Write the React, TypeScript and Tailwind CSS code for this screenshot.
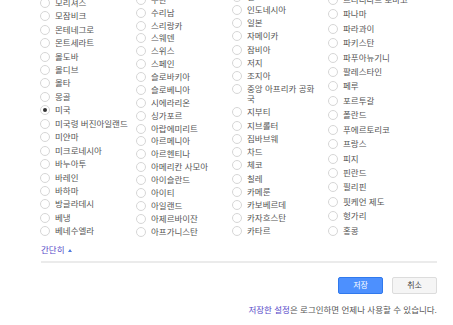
const COLUMNS: { items: string[]; row: string; label: string }[] = [
  {
    row: 'py-[1.72px]',
    label: 'pr-0',
    items: [
      '모리셔스', '모잠비크', '몬테네그로', '몬트세라트', '몰도바', '몰디브', '몰타', '몽골', '미국',
      '미국령 버진아일랜드', '미얀마', '미크로네시아', '바누아투', '바레인', '바하마', '방글라데시', '베냉', '베네수엘라',
    ],
  },
  {
    row: 'py-[1.45px]',
    label: 'pr-0',
    items: [
      '수단', '수리남', '스리랑카', '스웨덴', '스위스', '스페인', '슬로바키아', '슬로베니아', '시에라리온', '싱가포르',
      '아랍에미리트', '아르메니아', '아르헨티나', '아메리칸 사모아', '아이슬란드', '아이티', '아일랜드', '아제르바이잔', '아프가니스탄',
    ],
  },
  {
    row: 'py-[1.62px]',
    label: 'pr-[8px]',
    items: [
      '인도', '인도네시아', '일본', '자메이카', '잠비아', '저지', '조지아', '중앙 아프리카 공화국', '지부티', '지브롤터',
      '짐바브웨', '차드', '체코', '칠레', '카메룬', '카보베르데', '카자흐스탄', '카타르',
    ],
  },
  {
    row: 'py-[2.23px]',
    label: 'pr-0',
    items: [
      '트리니다드 토바고', '파나마', '파라과이', '파키스탄', '파푸아뉴기니', '팔레스타인', '페루', '포르투갈', '폴란드',
      '푸에르토리코', '프랑스', '피지', '핀란드', '필리핀', '핏케언 제도', '헝가리', '홍콩',
    ],
  },
]

const SELECTED = '미국'

export default function App() {
  return (
    <div className="h-[325px] w-[453px] overflow-hidden bg-white font-['Liberation_Sans','Noto_Sans_CJK_KR',sans-serif] text-[8.5px] text-[#555]">
      {/* Region list, scrolled so the columns end together at the bottom */}
      <div className="grid h-[238px] grid-cols-[96px_96px_96px_96px] pl-[39.5px]">
        {COLUMNS.map((col, i) => (
          <div key={i} className="flex h-full flex-col justify-end overflow-hidden">
            {col.items.map((name) => (
              <RegionOption
                key={name}
                name={name}
                checked={name === SELECTED}
                row={col.row}
                label={col.label}
              />
            ))}
          </div>
        ))}
      </div>

      <div className="pl-[41px] pr-[16px]">
        <a className="mt-[7px] flex items-center gap-[4px] leading-[10px] text-[#5548c8]">
          간단히
          <svg width="4" height="3" viewBox="0 0 4 3" aria-hidden>
            <path d="M0 3 L2 0 L4 3 Z" fill="#4d7be0" />
          </svg>
        </a>

        <div className="mt-[6px] h-[2px] bg-[#ebebeb]" />

        <div className="mt-[14px] flex justify-end gap-[9px]">
          <button className="h-[17px] w-[45px] rounded-[2px] border border-[#3079ed] bg-[#4d90fe] text-[8px] text-white">
            저장
          </button>
          <button className="h-[17px] w-[45px] rounded-[2px] border border-[#dcdcdc] bg-[#f5f5f5] text-[8px] text-[#444]">
            취소
          </button>
        </div>

        <p className="mt-[11px] text-right leading-[10px]">
          <a className="text-[#5548c8]">저장한 설정</a>은 로그인하면 언제나 사용할 수 있습니다.
        </p>
      </div>
    </div>
  )
}

function RegionOption({
  name,
  checked,
  row,
  label,
}: {
  name: string
  checked: boolean
  row: string
  label: string
}) {
  return (
    <label className={`flex shrink-0 items-start gap-[5.5px] ${row}`}>
      <span className="flex h-[10px] w-[10px] shrink-0 items-center justify-center rounded-full border border-[#d6d6d6] bg-white">
        {checked && <span className="h-[4px] w-[4px] rounded-full bg-[#333]" />}
      </span>
      <span className={`min-w-0 flex-1 leading-[10px] ${label}`}>{name}</span>
    </label>
  )
}
